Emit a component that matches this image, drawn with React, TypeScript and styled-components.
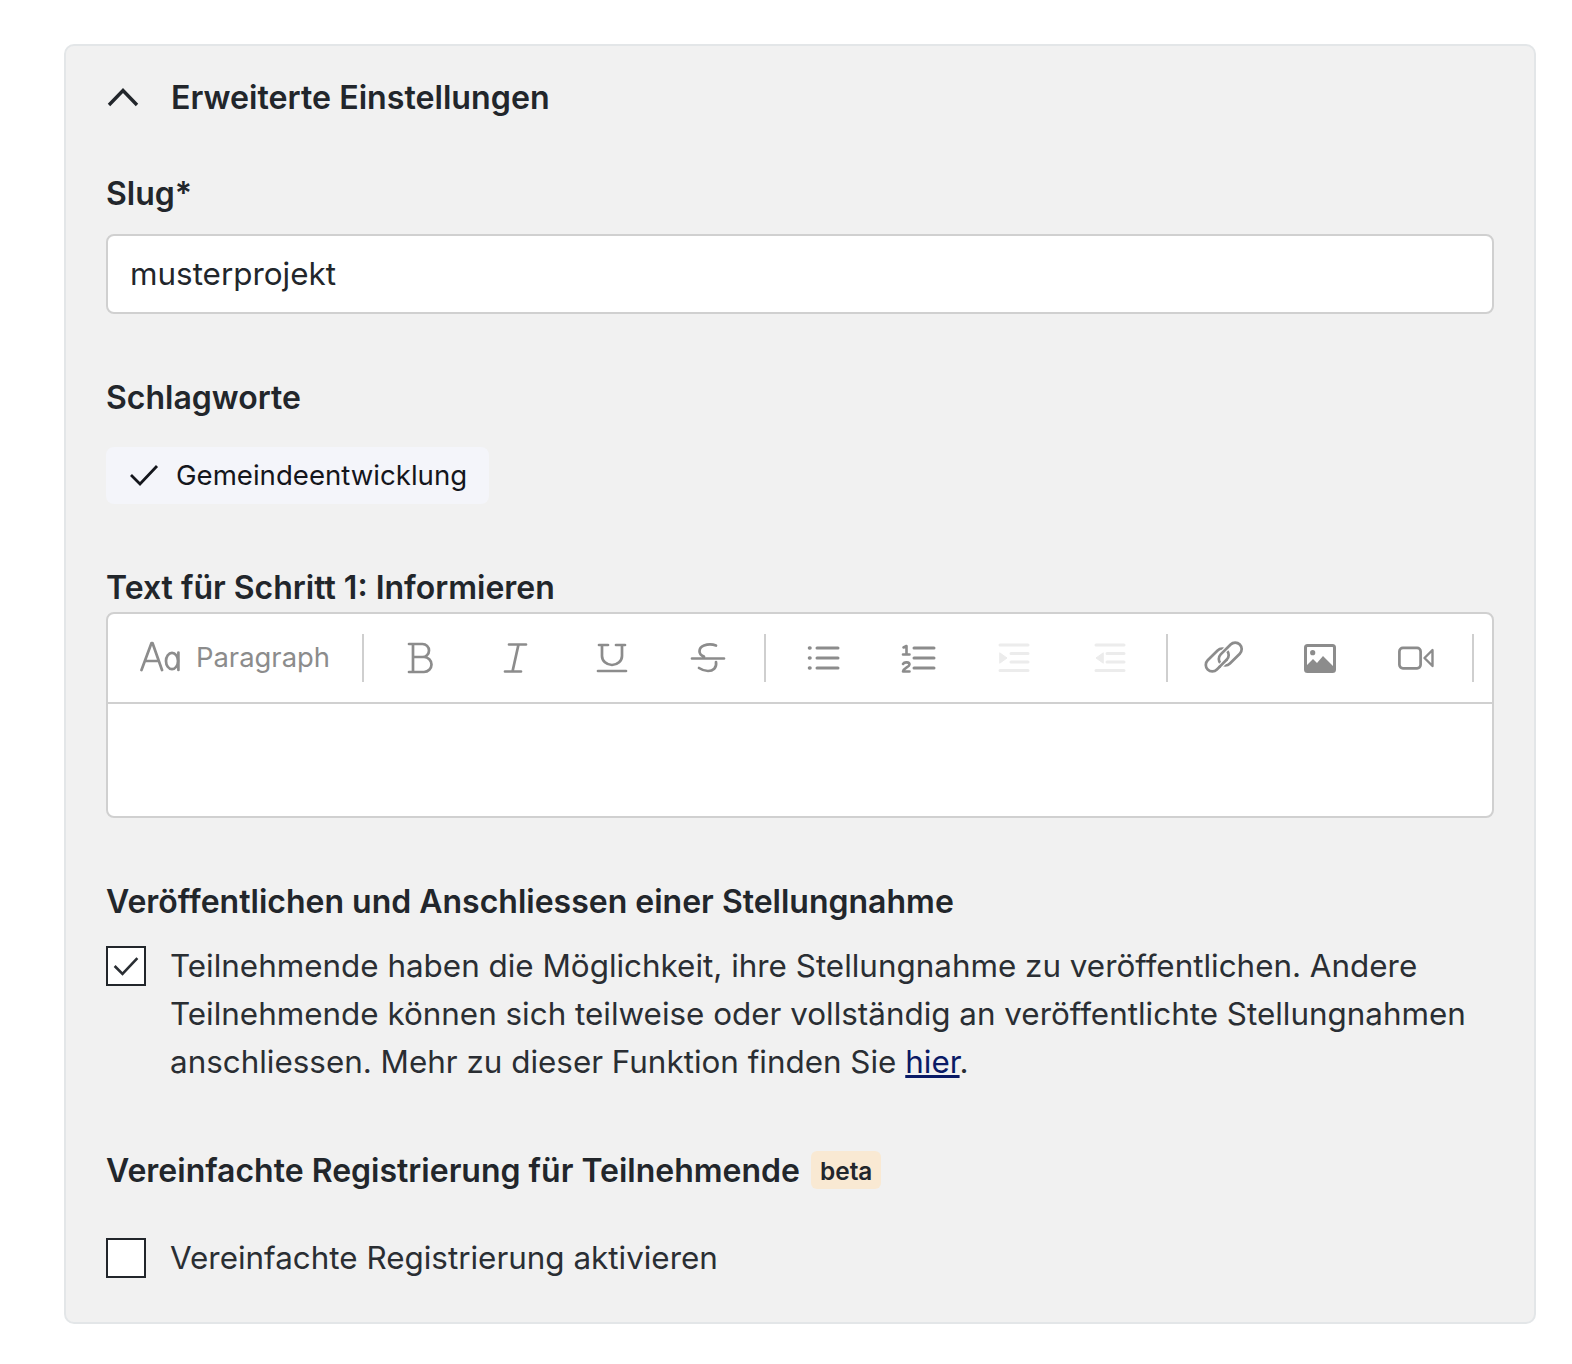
import React from 'react'
import styled, { createGlobalStyle } from 'styled-components'

const GlobalStyle = createGlobalStyle`
  html, body {
    margin: 0;
    padding: 0;
    background: #fff;
    font-family: Inter, "Liberation Sans", sans-serif;
    color: #22262b;
  }
`

const Page = styled.div`
  width: 1572px;
  height: 1364px;
  padding: 44px 36px 0 64px;
  box-sizing: border-box;
`

const Panel = styled.section`
  height: 1280px;
  box-sizing: border-box;
  padding: 27px 40px 0 40px;
  background: #f1f1f1;
  border: 2px solid #e3e6e8;
  border-radius: 10px;
`

const Summary = styled.div`
  display: flex;
  align-items: center;
  gap: 31px;
  height: 48px;
  margin-bottom: 49px;
  font-size: 32.2px;
  font-weight: 600;
`

const Label = styled.div<{ $gap: number }>`
  font-size: 32px;
  line-height: 48px;
  font-weight: 600;
  margin-bottom: ${p => p.$gap}px;
`

const Input = styled.div`
  height: 80px;
  box-sizing: border-box;
  padding: 0 22px 1px;
  display: flex;
  align-items: center;
  background: #fff;
  border: 2px solid #d0d0d0;
  border-radius: 8px;
  font-size: 31.4px;
  margin-bottom: 60px;
`

const Tag = styled.div`
  display: inline-flex;
  align-items: center;
  gap: 16px;
  height: 57px;
  width: 383px;
  box-sizing: border-box;
  padding: 0 0 2px 22px;
  background: #f4f5fa;
  border-radius: 8px;
  font-size: 27.6px;
  color: #14161c;
`

const TagRow = styled.div`
  display: flex;
  margin-bottom: 60px;
`

const Editor = styled.div`
  height: 206px;
  box-sizing: border-box;
  background: #fff;
  border: 2px solid #d0d0d0;
  border-radius: 8px;
  margin-bottom: 60px;
`

const Toolbar = styled.div`
  height: 90px;
  box-sizing: border-box;
  display: flex;
  align-items: center;
  padding-left: 32px;
  border-bottom: 2px solid #d0d0d0;
`

const StyleButton = styled.div`
  display: flex;
  align-items: center;
  gap: 16px;
  width: 222px;
  flex: none;
  padding-bottom: 2px;
  box-sizing: border-box;
  font-size: 27.4px;
  color: #8c8c8c;
`

const ToolGroup = styled.div`
  display: flex;
  align-items: center;
  flex: none;
  padding: 0 8px;
  height: 48px;
  border-left: 2px solid #cfcfcf;

  &:last-child {
    padding: 0;
  }
`

const ToolButton = styled.span<{ $muted?: boolean }>`
  width: 96px;
  flex: none;
  display: flex;
  justify-content: center;
  align-items: center;
  color: ${p => (p.$muted ? '#ececec' : '#8c8c8c')};
`

const Check = styled.div`
  display: flex;
  gap: 24px;
  font-size: 31.4px;
  line-height: 48px;
  color: #2a2e33;
`

const Box = styled.span`
  flex: none;
  width: 40px;
  height: 40px;
  margin-top: 4px;
  box-sizing: border-box;
  display: flex;
  align-items: center;
  justify-content: center;
  background: #fff;
  border: 2px solid #22262b;
`

const Link = styled.a`
  color: #0a1a66;
  text-decoration: underline;
`

const Beta = styled.span`
  display: inline-block;
  margin-left: 11px;
  padding: 0 9px;
  height: 38px;
  line-height: 40px;
  background: #f9e9d3;
  border-radius: 6px;
  font-size: 24.4px;
  font-weight: 600;
  vertical-align: 2px;
`

const Gap = styled.div<{ $h: number }>`
  height: ${p => p.$h}px;
`

const Ico = ({ children }: { children: React.ReactNode }) => (
  <svg width="40" height="40" viewBox="0 0 40 40" fill="none" stroke="currentColor" strokeWidth="2.7" strokeLinecap="round" strokeLinejoin="round">
    {children}
  </svg>
)

const CheckMark = ({ size, weight = 2.8 }: { size: number; weight?: number }) => (
  <svg width={size} height={size} viewBox="0 0 32 32" fill="none" stroke="currentColor" strokeWidth={weight}>
    <path d="M3 16l9 9L29 7" />
  </svg>
)

export default function App() {
  return (
    <>
      <GlobalStyle />
      <Page>
        <Panel>
          <Summary>
            <svg width="34" height="20" viewBox="0 0 34 20" fill="none" stroke="#22262b" strokeWidth="3.4">
              <path d="M3 18L17 3.5 31 18" />
            </svg>
            Erweiterte Einstellungen
          </Summary>

          <Label $gap={16}>Slug*</Label>
          <Input>musterprojekt</Input>

          <Label $gap={25}>Schlagworte</Label>
          <TagRow>
            <Tag><CheckMark size={32} />Gemeindeentwicklung</Tag>
          </TagRow>

          <Label $gap={0}>Text für Schritt 1: Informieren</Label>
          <Editor>
            <Toolbar>
              <StyleButton>
                <svg width="40" height="40" viewBox="0 0 40 40" fill="none" stroke="currentColor" strokeWidth="2.7" strokeLinecap="round" strokeLinejoin="round">
                  <path d="M1.5 33L11.5 6h1L22 33M5.5 24h13" />
                  <ellipse cx="32" cy="24" rx="6" ry="8.2" />
                  <path d="M38.4 15.5V33" />
                </svg>
                Paragraph
              </StyleButton>
              <ToolGroup>
                <ToolButton>
                  <Ico><path d="M9 6h13.5a6.5 6.5 0 010 13H13m0 0h11a7.5 7.5 0 010 15H9M13 6v28" /></Ico>
                </ToolButton>
                <ToolButton>
                  <Ico><path d="M13 6.5h17M9 33.5h16M22.5 6.5L16.5 33.5" /></Ico>
                </ToolButton>
                <ToolButton>
                  <Ico><path d="M7 7h9M24 7h9M10 7v11a10 9 0 0020 0V7M6 33h28" /></Ico>
                </ToolButton>
                <ToolButton>
                  <Ico><path d="M28 7.5c-4-1.5-8-1.5-12 0-6 2.5-6 9 0 11M4 20.5h32M28 24c1 6-3 9-8 9-3 0-6-1-9-3" /></Ico>
                </ToolButton>
              </ToolGroup>
              <ToolGroup>
                <ToolButton>
                  <Ico>
                    <path d="M15 10h21M15 20h21M15 30h21" strokeWidth="3" />
                    <path d="M7.5 10h.5M7.5 20h.5M7.5 30h.5" strokeWidth="3.6" />
                  </Ico>
                </ToolButton>
                <ToolButton>
                  <Ico>
                    <path d="M16 10h20M16 20h20M16 30h20" strokeWidth="3" />
                    <path d="M5.5 9.5l3-1.5v8M5 16.5h6.5M5 26c1.5-2.5 6.5-2 6.5 .5 0 2.5-6 3.5-6.5 7h6.5" strokeWidth="2.6" />
                  </Ico>
                </ToolButton>
                <ToolButton $muted>
                  <Ico>
                    <path d="M6 7h28M17 15.5h17M17 24h17M6 32.5h28" strokeWidth="3" />
                    <path d="M6 15l7 5-7 5z" fill="currentColor" strokeWidth="1" />
                  </Ico>
                </ToolButton>
                <ToolButton $muted>
                  <Ico>
                    <path d="M6 7h28M17 15.5h17M17 24h17M6 32.5h28" strokeWidth="3" />
                    <path d="M13 15l-7 5 7 5z" fill="currentColor" strokeWidth="1" />
                  </Ico>
                </ToolButton>
              </ToolGroup>
              <ToolGroup>
                <ToolButton>
                  <Ico>
                    <g transform="translate(19.75 19) rotate(-45)">
                      <rect x="-20.2" y="-9" width="27" height="13" rx="6.5" />
                      <path d="M1 -4h8" stroke="#fff" strokeWidth="5" strokeLinecap="butt" />
                      <rect x="-6.8" y="-4" width="27" height="13" rx="6.5" />
                      <path d="M-9 4h8" stroke="#fff" strokeWidth="5" strokeLinecap="butt" />
                      <path d="M-10 4h10" />
                    </g>
                  </Ico>
                </ToolButton>
                <ToolButton>
                  <svg width="40" height="40" viewBox="0 0 40 40">
                    <rect x="5.5" y="7.5" width="29" height="26" rx="2" fill="none" stroke="currentColor" strokeWidth="3" />
                    <circle cx="12.7" cy="14.7" r="2.6" fill="currentColor" />
                    <path d="M6 33v-5l7-7 4 4 6-7 11 11v4z" fill="currentColor" />
                  </svg>
                </ToolButton>
                <ToolButton>
                  <Ico>
                    <rect x="3.4" y="9.9" width="21.2" height="20.4" rx="3.5" />
                    <path d="M28.5 20l8-8v16z" strokeWidth="2.4" />
                  </Ico>
                </ToolButton>
              </ToolGroup>
              <ToolGroup />
            </Toolbar>
          </Editor>

          <Label $gap={16}>Veröffentlichen und Anschliessen einer Stellungnahme</Label>
          <Check>
            <Box><CheckMark size={28} weight={3} /></Box>
            <span>
              Teilnehmende haben die Möglichkeit, ihre Stellungnahme zu veröffentlichen. Andere Teilnehmende können sich teilweise oder vollständig an veröffentlichte Stellungnahmen anschliessen. Mehr zu dieser Funktion finden Sie <Link href="#">hier</Link>.
            </span>
          </Check>
          <Gap $h={61} />

          <Label $gap={39}>Vereinfachte Registrierung für Teilnehmende<Beta>beta</Beta></Label>
          <Check>
            <Box />
            <span>Vereinfachte Registrierung aktivieren</span>
          </Check>
        </Panel>
      </Page>
    </>
  )
}
